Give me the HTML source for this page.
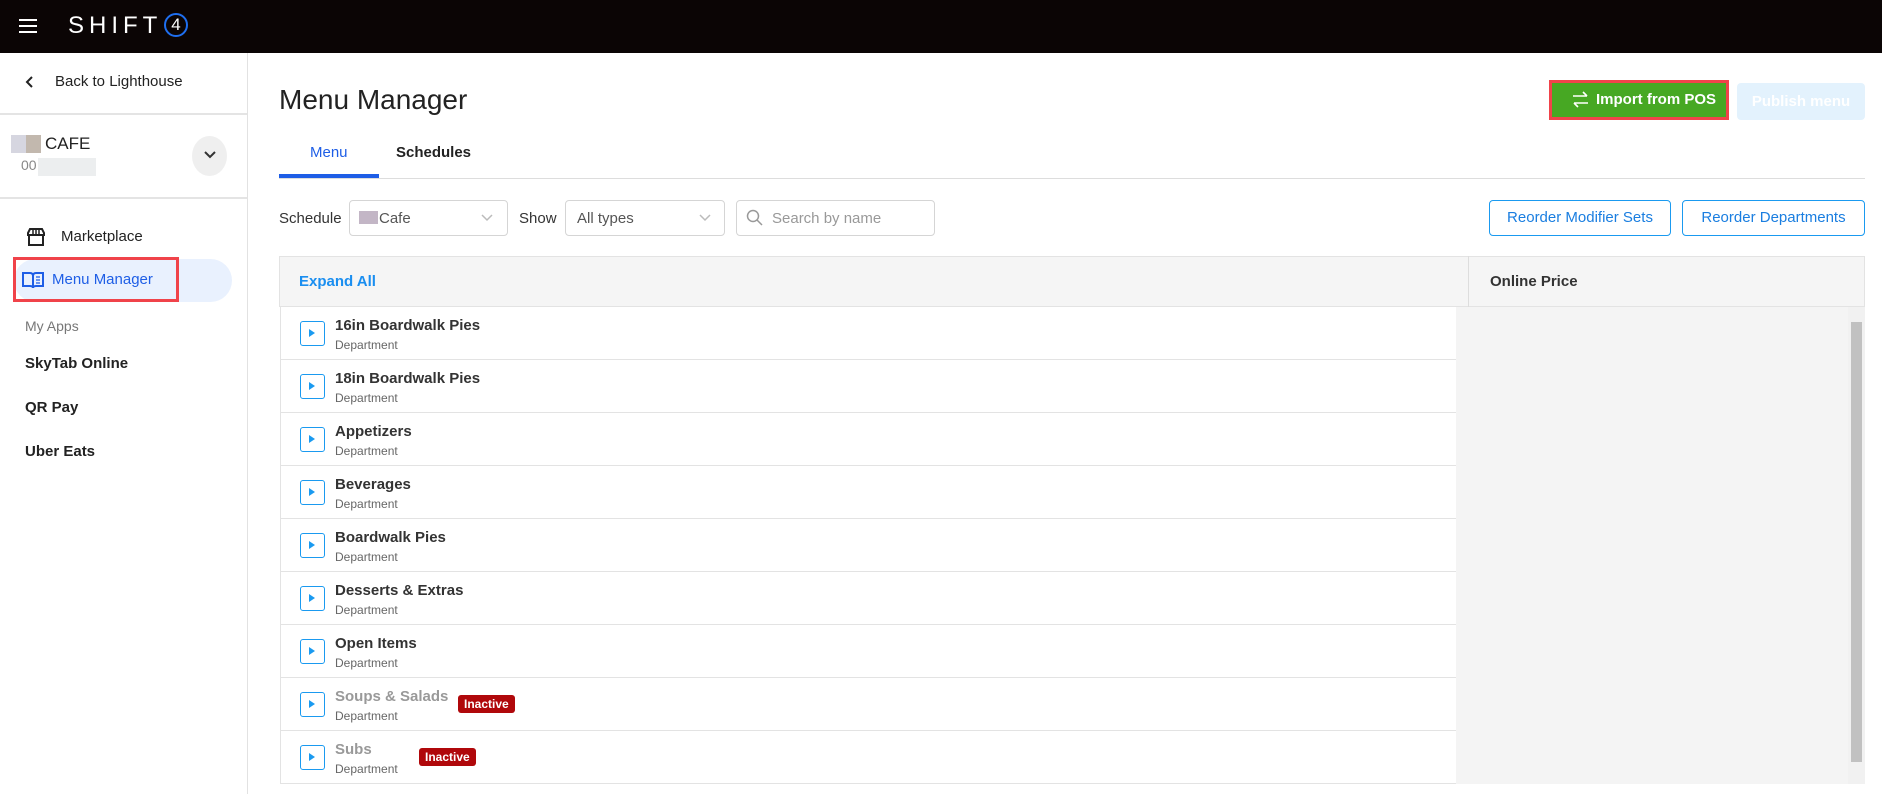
<!DOCTYPE html>
<html><head><meta charset="utf-8"><style>
*{box-sizing:border-box;margin:0;padding:0}
body{width:1882px;height:794px;overflow:hidden;background:#fff;font-family:"Liberation Sans",sans-serif;color:#222;position:relative}
.a{position:absolute}
.top{left:0;top:0;width:1882px;height:53px;background:#0b0505}
.side{left:0;top:53px;width:248px;height:741px;border-right:1px solid #e2e2e2}
.hr{height:2px;background:#e4e4e4}
.t{white-space:nowrap}
.row{left:280px;width:1176px;height:53px;border-bottom:1px solid #e3e3e3;border-left:1px solid #e3e3e3}
.ic{left:19px;top:14px;width:25px;height:25px;border:1.5px solid #1a9af0;border-radius:3px}
.ic:after{content:"";position:absolute;left:8px;top:7px;border-left:6px solid #1a9af0;border-top:4.5px solid transparent;border-bottom:4.5px solid transparent}
.nm{left:54px;top:10px;font-size:15px;font-weight:bold;color:#333}
.dp{left:54px;top:31px;font-size:12px;color:#666}
.in{top:17px;background:#b0080b;color:#fff;font-size:12px;font-weight:bold;padding:2px 6px;border-radius:3px}
.sel{border:1px solid #d5d5d5;border-radius:4px;height:36px;top:200px}
.btn{top:200px;height:36px;border:1.5px solid #1a9af0;border-radius:4px;color:#1a7ee0;font-size:15px;text-align:center;line-height:33px}
</style></head><body>
<div class="a top">
<div class="a" style="left:19px;top:19px;width:18px;height:2px;background:#fff;box-shadow:0 6px 0 #fff,0 12px 0 #fff"></div>
<div class="a t" style="left:68px;top:12px;color:#fff;font-size:24px;letter-spacing:5px">SHIFT</div>
<div class="a" style="left:164px;top:13px;width:24px;height:24px;border:2px solid #1f6ff0;border-radius:50%;color:#fff;font-size:17px;text-align:center;line-height:20px">4</div>
</div>
<div class="a side">
<svg class="a" style="left:24px;top:22px" width="12" height="14"><path d="M8 2 L3 7 L8 12" stroke="#222" stroke-width="2" fill="none"/></svg>
<div class="a t" style="left:55px;top:20px;font-size:15px">Back to Lighthouse</div>
<div class="a hr" style="left:0;top:60px;width:247px"></div>
<div class="a" style="left:11px;top:82px;width:15px;height:18px;background:#d6d6e0"></div>
<div class="a" style="left:26px;top:82px;width:15px;height:18px;background:#c2b8ae"></div>
<div class="a t" style="left:45px;top:81px;font-size:17px">CAFE</div>
<div class="a t" style="left:21px;top:104px;font-size:14px;color:#888">00</div>
<div class="a" style="left:38px;top:105px;width:58px;height:18px;background:#eceeef"></div>
<div class="a" style="left:192px;top:83px;width:35px;height:40px;border-radius:50%;background:#efefef"></div>
<svg class="a" style="left:203px;top:97px" width="14" height="10"><path d="M2 2 L7 7 L12 2" stroke="#333" stroke-width="2" fill="none"/></svg>
<div class="a hr" style="left:0;top:144px;width:247px"></div>
<svg class="a" style="left:26px;top:174px" width="20" height="20"><path d="M2 6 L4 2 H16 L18 6 V8 H2Z M3 8 V18 H17 V8" stroke="#222" stroke-width="2" fill="none"/><path d="M7 2V7M10 2V7M13 2V7" stroke="#222" stroke-width="1.5"/></svg>
<div class="a t" style="left:61px;top:175px;font-size:15px">Marketplace</div>
<div class="a" style="left:14px;top:206px;width:218px;height:43px;border-radius:22px;background:#e9f1fe"></div>
<div class="a" style="left:13px;top:204px;width:166px;height:45px;border:3px solid #f0434a"></div>
<svg class="a" style="left:22px;top:217px" width="22" height="20"><path d="M1 3 H8 Q11 3 11 6 V18 Q11 16 8 16 H1Z M21 3 H14 Q11 3 11 6 V18 Q11 16 14 16 H21Z" stroke="#1e5ee6" stroke-width="2" fill="none"/><path d="M14 7H18M14 10H18M14 13H18" stroke="#1e5ee6" stroke-width="1.3"/></svg>
<div class="a t" style="left:52px;top:218px;font-size:15px;color:#1e5ee6">Menu Manager</div>
<div class="a t" style="left:25px;top:265px;font-size:14px;color:#777">My Apps</div>
<div class="a t" style="left:25px;top:302px;font-size:15px;font-weight:bold">SkyTab Online</div>
<div class="a t" style="left:25px;top:346px;font-size:15px;font-weight:bold">QR Pay</div>
<div class="a t" style="left:25px;top:390px;font-size:15px;font-weight:bold">Uber Eats</div>
</div>
<div class="a t" style="left:279px;top:84px;font-size:28px;color:#222">Menu Manager</div>
<div class="a" style="left:1549px;top:80px;width:180px;height:40px;border:3px solid #f0434a;background:#47a823"></div>
<svg class="a" style="left:1572px;top:91px" width="17" height="17"><path d="M1 5H15M11 1L15 5M16 12H2M6 16L2 12" stroke="#fff" stroke-width="1.6" fill="none"/></svg>
<div class="a t" style="left:1596px;top:91px;font-size:15px;font-weight:bold;color:#fff">Import from POS</div>
<div class="a" style="left:1737px;top:83px;width:128px;height:37px;border-radius:4px;background:#e3f2fd;color:#fff;font-weight:bold;font-size:15px;text-align:center;line-height:37px">Publish menu</div>
<div class="a t" style="left:310px;top:144px;font-size:15px;color:#1e5ee6">Menu</div>
<div class="a t" style="left:396px;top:144px;font-size:15px;font-weight:bold">Schedules</div>
<div class="a" style="left:279px;top:178px;width:1586px;height:1px;background:#ddd"></div>
<div class="a" style="left:279px;top:174px;width:100px;height:4px;background:#1e5ee6"></div>
<div class="a t" style="left:279px;top:210px;font-size:15px;color:#333">Schedule</div>
<div class="a sel" style="left:349px;width:159px"></div>
<div class="a" style="left:359px;top:211px;width:19px;height:13px;background:#c3b6c6"></div>
<div class="a t" style="left:379px;top:210px;font-size:15px;color:#555">Cafe</div>
<svg class="a" style="left:480px;top:213px" width="14" height="10"><path d="M2 2 L7 7 L12 2" stroke="#bbb" stroke-width="1.5" fill="none"/></svg>
<div class="a t" style="left:519px;top:210px;font-size:15px;color:#333">Show</div>
<div class="a sel" style="left:565px;width:160px"></div>
<div class="a t" style="left:577px;top:210px;font-size:15px;color:#555">All types</div>
<svg class="a" style="left:698px;top:213px" width="14" height="10"><path d="M2 2 L7 7 L12 2" stroke="#bbb" stroke-width="1.5" fill="none"/></svg>
<div class="a sel" style="left:736px;width:199px"></div>
<svg class="a" style="left:746px;top:209px" width="18" height="18"><circle cx="7" cy="7" r="5.5" stroke="#999" stroke-width="1.5" fill="none"/><path d="M11 11L16 16" stroke="#999" stroke-width="1.5"/></svg>
<div class="a t" style="left:772px;top:210px;font-size:15px;color:#999">Search by name</div>
<div class="a btn" style="left:1489px;width:182px">Reorder Modifier Sets</div>
<div class="a btn" style="left:1682px;width:183px">Reorder Departments</div>
<div class="a" style="left:279px;top:256px;width:1586px;height:51px;background:#f5f5f5;border:1px solid #e3e3e3"></div>
<div class="a" style="left:1468px;top:256px;width:1px;height:51px;background:#ddd"></div>
<div class="a t" style="left:299px;top:273px;font-size:15px;font-weight:bold;color:#1a8ef0">Expand All</div>
<div class="a t" style="left:1490px;top:273px;font-size:15px;font-weight:bold;color:#333">Online Price</div>
<div class="a" style="left:1456px;top:307px;width:392px;height:477px;background:#f4f4f4"></div>
<div class="a" style="left:1848px;top:307px;width:17px;height:477px;background:#f1f1f1"></div>
<div class="a" style="left:1851px;top:322px;width:11px;height:440px;background:#c1c1c1"></div>
<div class="a row" style="top:307px"><div class="a ic"></div><div class="a t nm">16in Boardwalk Pies</div><div class="a t dp">Department</div></div>
<div class="a row" style="top:360px"><div class="a ic"></div><div class="a t nm">18in Boardwalk Pies</div><div class="a t dp">Department</div></div>
<div class="a row" style="top:413px"><div class="a ic"></div><div class="a t nm">Appetizers</div><div class="a t dp">Department</div></div>
<div class="a row" style="top:466px"><div class="a ic"></div><div class="a t nm">Beverages</div><div class="a t dp">Department</div></div>
<div class="a row" style="top:519px"><div class="a ic"></div><div class="a t nm">Boardwalk Pies</div><div class="a t dp">Department</div></div>
<div class="a row" style="top:572px"><div class="a ic"></div><div class="a t nm">Desserts &amp; Extras</div><div class="a t dp">Department</div></div>
<div class="a row" style="top:625px"><div class="a ic"></div><div class="a t nm">Open Items</div><div class="a t dp">Department</div></div>
<div class="a row" style="top:678px"><div class="a ic"></div><div class="a t nm" style="color:#999">Soups &amp; Salads</div><div class="a t dp">Department</div><div class="a t in" style="left:177px">Inactive</div></div>
<div class="a row" style="top:731px"><div class="a ic"></div><div class="a t nm" style="color:#999">Subs</div><div class="a t dp">Department</div><div class="a t in" style="left:138px">Inactive</div></div>
</body></html>
